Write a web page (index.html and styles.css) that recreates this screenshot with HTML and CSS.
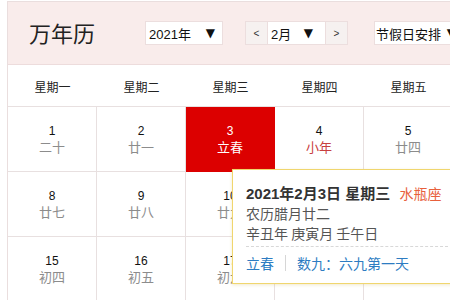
FILE: index.html
```html
<!DOCTYPE html>
<html>
<head>
  <meta charset="utf-8">
  <title>万年历</title>
  <link rel="stylesheet" href="styles.css">
</head>
<body>
  <div class="calendar">
    <div class="header">
      <h1 class="title">万年历</h1>
      <div class="select year-select">
        <span>2021年</span>
        <span class="arrow">▼</span>
      </div>
      <div class="month-group">
        <button class="nav-btn">&lt;</button>
        <div class="select month-select">
          <span>2月</span>
          <span class="arrow">▼</span>
        </div>
        <button class="nav-btn">&gt;</button>
      </div>
      <div class="select holiday-select">
        <span>节假日安排</span>
        <span class="arrow">▼</span>
      </div>
    </div>

    <div class="weekdays">
      <div>星期一</div>
      <div>星期二</div>
      <div>星期三</div>
      <div>星期四</div>
      <div>星期五</div>
      <div>星期六</div>
      <div>星期日</div>
    </div>

    <div class="days">
      <div class="day"><span class="num">1</span><span class="lunar">二十</span></div>
      <div class="day"><span class="num">2</span><span class="lunar">廿一</span></div>
      <div class="day selected"><span class="num">3</span><span class="lunar">立春</span></div>
      <div class="day"><span class="num">4</span><span class="lunar festival">小年</span></div>
      <div class="day"><span class="num">5</span><span class="lunar">廿四</span></div>
      <div class="day"><span class="num">6</span><span class="lunar">廿五</span></div>
      <div class="day"><span class="num">7</span><span class="lunar">廿六</span></div>

      <div class="day"><span class="num">8</span><span class="lunar">廿七</span></div>
      <div class="day"><span class="num">9</span><span class="lunar">廿八</span></div>
      <div class="day"><span class="num">10</span><span class="lunar">廿九</span></div>
      <div class="day"><span class="num">11</span><span class="lunar festival">除夕</span></div>
      <div class="day"><span class="num">12</span><span class="lunar festival">春节</span></div>
      <div class="day"><span class="num">13</span><span class="lunar">初二</span></div>
      <div class="day"><span class="num">14</span><span class="lunar festival">情人节</span></div>

      <div class="day"><span class="num">15</span><span class="lunar">初四</span></div>
      <div class="day"><span class="num">16</span><span class="lunar">初五</span></div>
      <div class="day"><span class="num">17</span><span class="lunar">初六</span></div>
      <div class="day"><span class="num">18</span><span class="lunar">雨水</span></div>
      <div class="day"><span class="num">19</span><span class="lunar">初八</span></div>
      <div class="day"><span class="num">20</span><span class="lunar">初九</span></div>
      <div class="day"><span class="num">21</span><span class="lunar">初十</span></div>
    </div>

    <div class="popup">
      <div class="popup-date">2021年2月3日 星期三 <span class="zodiac">水瓶座</span></div>
      <div class="popup-line">农历腊月廿二</div>
      <div class="popup-line">辛丑年 庚寅月 壬午日</div>
      <div class="popup-footer">
        <span>立春</span>
        <span class="sep"></span>
        <span>数九：六九第一天</span>
      </div>
    </div>
  </div>
</body>
</html>
```

FILE: styles.css
```css
* {
  margin: 0;
  padding: 0;
  box-sizing: border-box;
}

body {
  font-family: 'Liberation Sans', 'Noto Sans CJK SC', sans-serif;
  background: #fff;
  width: 450px;
  height: 300px;
  overflow: hidden;
}

.calendar {
  position: relative;
  width: 624px;
  margin: 1px 0 0 7px;
  border: 1px solid #eadede;
  border-bottom: none;
}

.header {
  height: 63px;
  background: #f9eceb;
  border-bottom: 1px solid #eddcdc;
  display: flex;
  align-items: center;
  padding-left: 21px;
}

.title {
  font-family: 'Noto Sans CJK SC', sans-serif;
  font-size: 22px;
  font-weight: 400;
  color: #222;
  width: 116px;
  margin-top: -3px;
}

.select {
  height: 24px;
  background: #fff;
  border: 1px solid #ecdede;
  display: flex;
  align-items: center;
  justify-content: space-between;
  padding: 0 7px 0 3px;
  font-size: 13px;
  color: #111;
}

.select .arrow {
  font-size: 12px;
  font-family: 'DejaVu Sans', sans-serif;
}

.year-select {
  width: 78px;
}

.month-group {
  display: flex;
  margin-left: 22px;
}

.nav-btn {
  width: 23px;
  height: 24px;
  background: #f6f1f0;
  border: 1px solid #ecdede;
  font-family: 'Liberation Sans', sans-serif;
  font-size: 10px;
  color: #333;
}

.month-select {
  width: 57px;
  border-left: none;
  border-right: none;
  padding-right: 12px;
}

.holiday-select {
  margin-left: 26px;
  width: 90px;
  padding-left: 1px;
}

.weekdays {
  display: grid;
  grid-template-columns: repeat(7, 89px);
  height: 42px;
  border-bottom: 1px solid #e8e0e0;
}

.weekdays div {
  display: flex;
  align-items: center;
  justify-content: center;
  font-size: 12px;
  color: #222;
  padding-top: 1px;
}

.days {
  display: grid;
  grid-template-columns: repeat(7, 89px);
  grid-auto-rows: 65px;
}

.day {
  display: flex;
  flex-direction: column;
  align-items: center;
  justify-content: center;
  border-right: 1px solid #e8e0e0;
  border-bottom: 1px solid #e8e0e0;
  padding-top: 1px;
}

.num {
  font-size: 12px;
  line-height: 16px;
  color: #111;
}

.lunar {
  font-size: 13px;
  line-height: 18px;
  color: #8c8c8c;
}

.lunar.festival {
  color: #c8403f;
}

.day.selected {
  background: #dc0000;
  border-color: #dc0000;
}

.day.selected .num,
.day.selected .lunar {
  color: #fff;
}

.popup {
  position: absolute;
  left: 224px;
  top: 167px;
  width: 240px;
  height: 115px;
  background: #fff;
  border: 1px solid #f0d66e;
  box-shadow: 0 1px 3px rgba(200, 170, 60, 0.25);
  padding: 14px 0 0 13px;
  font-family: 'Noto Sans CJK SC', sans-serif;
  font-size: 14px;
  color: #555;
}

.popup-date {
  font-size: 15px;
  font-weight: 700;
  color: #333;
  line-height: 18px;
  font-family: 'Liberation Sans', 'Noto Sans CJK SC', sans-serif;
}

.zodiac {
  font-size: 14px;
  font-weight: 400;
  color: #e8603c;
  margin-left: 5px;
  font-family: 'Noto Sans CJK SC', sans-serif;
}

.popup-line {
  line-height: 20px;
}

.popup-footer {
  margin-top: 3px;
  margin-right: 18px;
  border-top: 1px dashed #d8d8d8;
  padding-top: 6px;
  line-height: 20px;
  color: #2d7cc2;
  display: flex;
  align-items: center;
}

.sep {
  width: 1px;
  height: 16px;
  background: #d6d6d6;
  margin: 0 11px;
}
```
